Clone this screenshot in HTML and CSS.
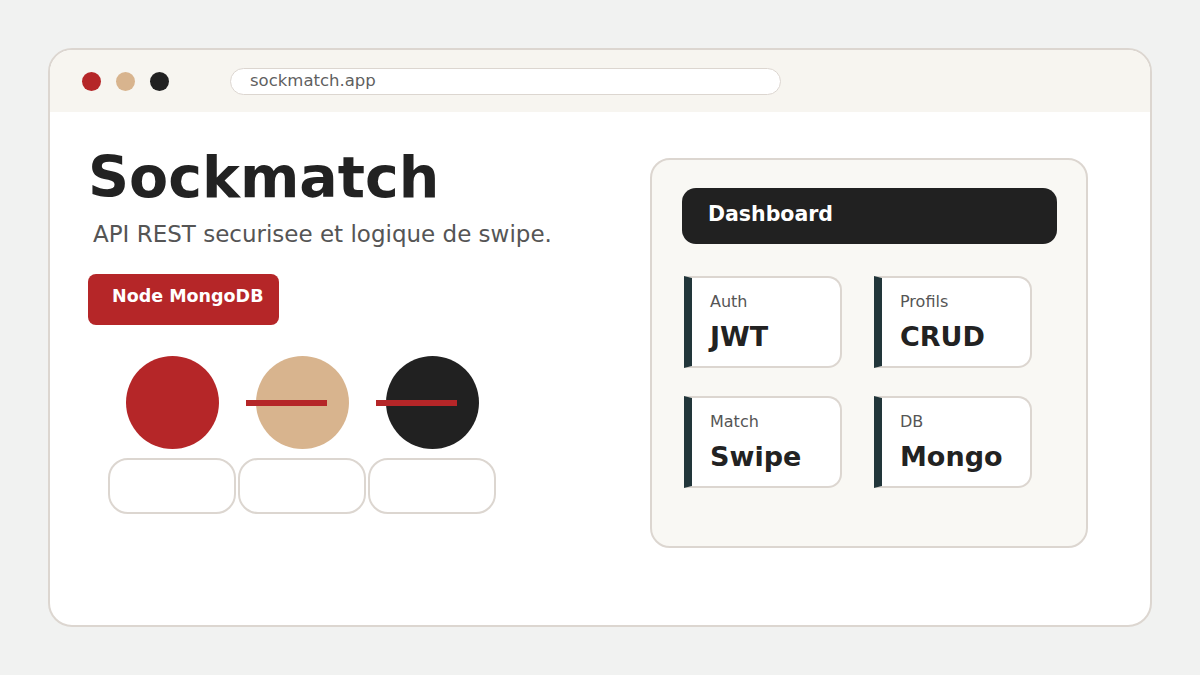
FILE: index.html
```html
<!DOCTYPE html>
<html lang="fr">
<head>
<meta charset="utf-8">
<title>Sockmatch</title>
<link rel="stylesheet" href="styles.css">
</head>
<body>
<div class="window">
  <div class="titlebar">
    <div class="dots">
      <span class="dot dot-red"></span>
      <span class="dot dot-tan"></span>
      <span class="dot dot-black"></span>
    </div>
    <div class="url">sockmatch.app</div>
  </div>
  <div class="main">
    <div class="left">
      <h1 class="title">Sockmatch</h1>
      <p class="subtitle">API REST securisee et logique de swipe.</p>
      <div class="badge">Node MongoDB</div>
      <div class="circles">
        <div class="circle c-red"></div>
        <div class="circle c-tan"><span class="line"></span></div>
        <div class="circle c-black"><span class="line"></span></div>
      </div>
      <div class="pills">
        <div class="pill"></div>
        <div class="pill"></div>
        <div class="pill"></div>
      </div>
    </div>
    <div class="panel">
      <div class="panel-head">Dashboard</div>
      <div class="cards">
        <div class="card"><div class="label">Auth</div><div class="value">JWT</div></div>
        <div class="card"><div class="label">Profils</div><div class="value">CRUD</div></div>
        <div class="card"><div class="label">Match</div><div class="value">Swipe</div></div>
        <div class="card"><div class="label">DB</div><div class="value">Mongo</div></div>
      </div>
    </div>
  </div>
</div>
</body>
</html>
```
FILE: styles.css
```css
* { box-sizing: border-box; }
html, body { margin: 0; padding: 0; }
body {
  width: 1200px;
  height: 675px;
  background: #f1f2f1;
  font-family: "DejaVu Sans", sans-serif;
  color: #222;
  padding-top: 48px;
  overflow: hidden;
}
.window {
  margin-left: 48px;
  width: 1104px;
  height: 579px;
  border: 2px solid #dcd6d0;
  border-radius: 24px;
  background: #fff;
  overflow: hidden;
}
.titlebar {
  height: 62px;
  background: #f7f5f0;
  display: flex;
  align-items: center;
  padding-left: 32px;
}
.dots { display: flex; gap: 15px; }
.dot { width: 19px; height: 19px; border-radius: 50%; display: block; }
.dot-red { background: #b52628; }
.dot-tan { background: #d8b48e; }
.dot-black { background: #212121; }
.url {
  margin-left: 61px;
  width: 551px;
  height: 27px;
  border: 1px solid #dcd6d0;
  border-radius: 14px;
  background: #fff;
  font-size: 16.5px;
  color: #5f5f5f;
  padding-left: 19px;
  line-height: 24px;
}
.main {
  display: flex;
  justify-content: space-between;
  padding: 46px 62px 0 38px;
}
.left { width: 520px; }
.title {
  margin: -12px 0 0 0;
  font-size: 57px;
  font-weight: 700;
  line-height: 62px;
  color: #222;
}
.subtitle {
  margin: 13px 0 0 5px;
  font-size: 23px;
  line-height: 26px;
  color: #555;
}
.badge {
  margin-top: 27px;
  width: 191px;
  height: 51px;
  background: #b52628;
  border-radius: 8px;
  color: #fff;
  font-weight: 700;
  font-size: 17.5px;
  padding: 12px 0 0 24px;
}
.circles {
  display: flex;
  gap: 37px;
  margin-top: 31px;
  margin-left: 38px;
}
.circle { width: 93px; height: 93px; border-radius: 50%; position: relative; }
.c-red { background: #b52628; }
.c-tan { background: #d8b48e; }
.c-black { background: #212121; }
.line {
  position: absolute;
  left: -10px;
  top: 44px;
  width: 81px;
  height: 6px;
  background: #b52628;
}
.pills {
  display: flex;
  gap: 2px;
  margin-top: 9px;
  margin-left: 20px;
}
.pill {
  width: 128px;
  height: 56px;
  border: 2px solid #dcd6d0;
  border-radius: 20px;
  background: #fff;
}
.panel {
  width: 438px;
  height: 390px;
  background: #f9f8f4;
  border: 2px solid #dcd6d0;
  border-radius: 20px;
  padding: 28px 29px 0 30px;
}
.panel-head {
  height: 56px;
  background: #212121;
  border-radius: 14px;
  color: #fff;
  font-weight: 700;
  font-size: 20.5px;
  padding: 14px 0 0 26px;
}
.cards {
  display: grid;
  grid-template-columns: 158px 158px;
  column-gap: 32px;
  row-gap: 28px;
  margin-top: 32px;
  margin-left: 2px;
}
.card {
  height: 92px;
  background: #fff;
  border: 2px solid #dcd6d0;
  border-left: 8px solid #22363a;
  border-radius: 0 14px 14px 0;
  padding: 14px 0 0 18px;
}
.label { font-size: 16px; color: #555; line-height: 20px; }
.value { font-size: 27px; font-weight: 700; color: #222; line-height: 34px; margin-top: 8px; }
```
